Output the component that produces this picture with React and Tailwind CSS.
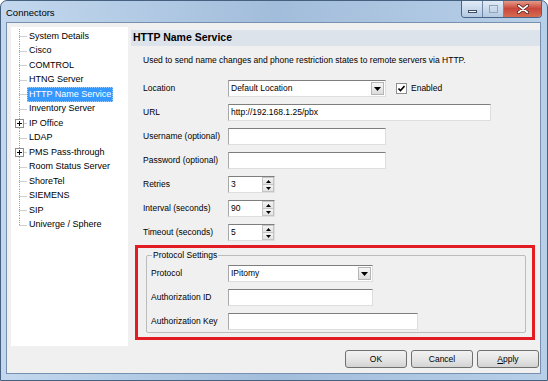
const treeItems = [
  { label: 'System Details' },
  { label: 'Cisco' },
  { label: 'COMTROL' },
  { label: 'HTNG Server' },
  { label: 'HTTP Name Service', selected: true },
  { label: 'Inventory Server' },
  { label: 'IP Office', expand: true },
  { label: 'LDAP' },
  { label: 'PMS Pass-through', expand: true },
  { label: 'Room Status Server' },
  { label: 'ShoreTel' },
  { label: 'SIEMENS' },
  { label: 'SIP' },
  { label: 'Univerge / Sphere', last: true },
]

const TreeRow = ({ item }) => (
  <div className="flex items-center h-[14.5px]">
    <svg width="16" height="14.5" viewBox="0 0 16 14.5" className="shrink-0">
      <line x1="8.5" y1="0" x2="8.5" y2={item.last ? 7.5 : 14.5} stroke="#a0a0a0" strokeDasharray="1 1" />
      <line x1="8.5" y1="7.5" x2="16" y2="7.5" stroke="#a0a0a0" strokeDasharray="1 1" />
      {item.expand && (
        <>
          <rect x="4.5" y="3.5" width="8" height="8" fill="#fff" stroke="#8e8f8f" />
          <line x1="6" y1="7.5" x2="11" y2="7.5" stroke="#000" />
          <line x1="8.5" y1="5" x2="8.5" y2="10" stroke="#000" />
        </>
      )}
    </svg>
    <span
      className={`px-[1px] leading-[13px] whitespace-nowrap ${
        item.selected ? 'bg-[#3399ff] text-white border border-dotted border-[#9fd0ff]' : 'border border-transparent'
      }`}
    >
      {item.label}
    </span>
  </div>
)

const TextBox = ({ width, value }) => (
  <div
    className={`${width} h-[17px] bg-white border border-t-[#7e7e7e] border-l-[#a8a8a8] border-r-[#dedede] border-b-[#dedede] flex items-center px-[2px] whitespace-nowrap`}
  >
    {value}
  </div>
)

const Arrow = () => (
  <svg width="7" height="4" viewBox="0 0 7 4">
    <path d="M0 0h7L3.5 4z" fill="#000" />
  </svg>
)

const Combo = ({ width, value }) => (
  <div
    className={`${width} h-[17px] bg-white border border-t-[#7e7e7e] border-l-[#a8a8a8] border-r-[#dedede] border-b-[#dedede] flex items-center pl-[2px] pr-[1px]`}
  >
    <span className="flex-1 whitespace-nowrap">{value}</span>
    <div className="w-[13px] h-[13px] border border-[#b5b5b5] bg-linear-to-b from-[#f6f6f6] to-[#dcdcdc] flex items-center justify-center">
      <Arrow />
    </div>
  </div>
)

// up / down halves of a numeric spinner
const Spin = ({ value }) => (
  <div className="w-[47px] h-[17px] bg-white border border-t-[#7e7e7e] border-l-[#a8a8a8] border-r-[#dedede] border-b-[#dedede] flex">
    <span className="flex-1 pl-[2px] flex items-center">{value}</span>
    <div className="w-[12px] flex flex-col">
      <div className="flex-1 border border-[#c4c4c4] bg-linear-to-b from-[#f4f4f4] to-[#e2e2e2] flex items-center justify-center">
        <svg width="5" height="3" viewBox="0 0 5 3">
          <path d="M0 3h5L2.5 0z" fill="#000" />
        </svg>
      </div>
      <div className="flex-1 border border-t-0 border-[#c4c4c4] bg-linear-to-b from-[#f4f4f4] to-[#e2e2e2] flex items-center justify-center">
        <svg width="5" height="3" viewBox="0 0 5 3">
          <path d="M0 0h5L2.5 3z" fill="#000" />
        </svg>
      </div>
    </div>
  </div>
)

const Row = ({ label, labelWidth, children }) => (
  <div className="flex items-center h-[17px]">
    <span className={`${labelWidth} shrink-0 whitespace-nowrap`}>{label}</span>
    {children}
  </div>
)

const Button = ({ children }) => (
  <div className="w-[62px] h-[18px] rounded-[3px] border border-[#707070] bg-linear-to-b from-[#f2f2f2] via-[#e6e6e6] to-[#d3d3d3] flex items-center justify-center">
    {children}
  </div>
)

export default function App() {
  return (
    <div className="w-[548px] h-[381px] overflow-hidden rounded-t-[7px] border border-[#46607f] bg-linear-to-r from-[#c3d8ee] via-[#a2bddb] to-[#b8cfe8] flex flex-col font-['Liberation_Sans',Arial,sans-serif] text-[8.5px] text-black">
      {/* title bar */}
      <div className="h-[21px] flex items-start shrink-0">
        <span className="ml-[5px] mt-[6px] text-[9.5px] leading-[11px]">Connectors</span>
        <div className="ml-auto mr-[5px] -mt-[1px] flex h-[18px] rounded-b-[4px] border border-t-0 border-[#4b6286] overflow-hidden">
          <div className="w-[21px] bg-linear-to-b from-[#e4edf7] to-[#b3c9e1] border-r border-[#6f87a8] flex items-end justify-center pb-[4px]">
            <span className="w-[9px] h-[3px] bg-white border border-[#3d4f68]" />
          </div>
          <div className="w-[21px] bg-linear-to-b from-[#e4edf7] to-[#b3c9e1] border-r border-[#6f87a8] flex items-center justify-center">
            <span className="w-[9px] h-[8px] border border-[#8fa4bf] bg-transparent" />
          </div>
          <div className="w-[37px] bg-linear-to-b from-[#e8a494] via-[#c8473b] to-[#d66a50] flex items-center justify-center">
            <svg width="12" height="10" viewBox="0 0 12 10">
              <path d="M1.5 1.5 10.5 8.5M10.5 1.5 1.5 8.5" stroke="#4a1c18" strokeWidth="3.2" strokeLinecap="round" />
              <path d="M1.5 1.5 10.5 8.5M10.5 1.5 1.5 8.5" stroke="#fff" strokeWidth="1.6" strokeLinecap="round" />
            </svg>
          </div>
        </div>
      </div>

      {/* client area */}
      <div className="ml-[5px] mr-[6px] mb-[6px] flex-1 border border-[#7890b0] bg-[#f0f0f0] flex flex-col">
        <div className="flex">
          {/* tree */}
          <div className="ml-[4px] mt-[4px] w-[117px] h-[319px] bg-white pt-[2px] text-[9px]">
            {treeItems.map((item) => (
              <TreeRow key={item.label} item={item} />
            ))}
          </div>

          {/* settings panel */}
          <div className="flex-1 ml-[3px] mt-[7px] flex flex-col">
            <div className="h-[16px] bg-[#dce3eb] pl-[2px] flex items-center font-bold text-[10.5px]">
              HTTP Name Service
            </div>
            <div className="pl-[12px]">
              <p className="mt-[9px] leading-[11px]">
                Used to send name changes and phone restriction states to remote servers via HTTP.
              </p>
              <div className="mt-[14px] flex flex-col gap-[7px]">
                <Row label="Location" labelWidth="w-[85px]">
                  <Combo width="w-[158px]" value="Default Location" />
                  <span className="ml-[10px] w-[11px] h-[11px] bg-white border border-[#8e8f8f] flex items-center justify-center">
                    <svg width="7" height="7" viewBox="0 0 7 7">
                      <path d="M0.5 3.5 2.5 5.5 6.5 1" stroke="#000" strokeWidth="1.6" fill="none" />
                    </svg>
                  </span>
                  <span className="ml-[4px]">Enabled</span>
                </Row>
                <Row label="URL" labelWidth="w-[85px]">
                  <TextBox width="w-[263px]" value="http://192.168.1.25/pbx" />
                </Row>
                <Row label="Username (optional)" labelWidth="w-[85px]">
                  <TextBox width="w-[158px]" />
                </Row>
                <Row label="Password (optional)" labelWidth="w-[85px]">
                  <TextBox width="w-[158px]" />
                </Row>
                <Row label="Retries" labelWidth="w-[85px]">
                  <Spin value="3" />
                </Row>
                <Row label="Interval (seconds)" labelWidth="w-[85px]">
                  <Spin value="90" />
                </Row>
                <Row label="Timeout (seconds)" labelWidth="w-[85px]">
                  <Spin value="5" />
                </Row>
              </div>
            </div>

            {/* highlighted protocol settings */}
            <div className="mt-[4px] ml-[4px] mr-[5px] border-[3px] border-[#e31c24] pt-[7px] pl-[8px] pr-[6px] pb-[4px]">
              <div className="border border-[#bcbcbc] rounded-[2px] flex flex-col pl-[4px] pb-[2px]">
                <span className="-mt-[6px] ml-[1px] px-[1px] self-start leading-[11px] bg-[#f0f0f0]">
                  Protocol Settings
                </span>
                <div className="mt-[4px] flex flex-col gap-[7px]">
                  <Row label="Protocol" labelWidth="w-[77px]">
                    <Combo width="w-[145px]" value="IPitomy" />
                  </Row>
                  <Row label="Authorization ID" labelWidth="w-[77px]">
                    <TextBox width="w-[145px]" />
                  </Row>
                  <Row label="Authorization Key" labelWidth="w-[77px]">
                    <TextBox width="w-[190px]" />
                  </Row>
                </div>
              </div>
            </div>
          </div>
        </div>

        {/* dialog buttons */}
        <div className="mt-[4px] flex justify-end gap-[4px] pr-[1px]">
          <Button>OK</Button>
          <Button>Cancel</Button>
          <Button>
            <span>
              <span className="underline">A</span>pply
            </span>
          </Button>
        </div>
      </div>
    </div>
  )
}
